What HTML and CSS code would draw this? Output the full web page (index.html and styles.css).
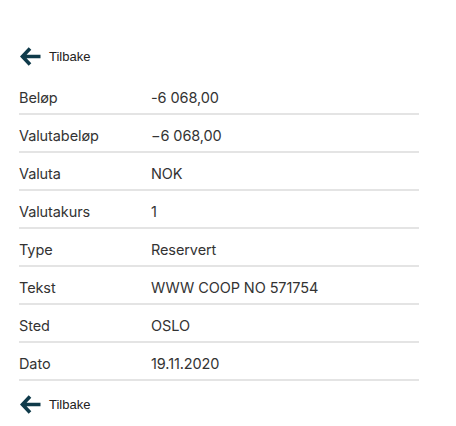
FILE: index.html
```html
<!DOCTYPE html>
<html lang="no">
<head>
  <meta charset="UTF-8" />
  <title>Transaksjon</title>
  <link rel="stylesheet" href="styles.css">
</head>
<body>
  <div class="details">
    <a class="back" href="#">
      <svg width="21" height="19" viewBox="0 0 21 19"><path d="M10 1.5 L2.4 9.5 L10 17.5 M2.8 9.5 H20.5" fill="none" stroke="#0f3a4a" stroke-width="3.6"/></svg>
      <span>Tilbake</span>
    </a>

    <ul class="rows">
      <li><span class="label">Beløp</span><span class="value">-6 068,00</span></li>
      <li><span class="label">Valutabeløp</span><span class="value">−6 068,00</span></li>
      <li><span class="label">Valuta</span><span class="value">NOK</span></li>
      <li><span class="label">Valutakurs</span><span class="value">1</span></li>
      <li><span class="label">Type</span><span class="value">Reservert</span></li>
      <li><span class="label">Tekst</span><span class="value">WWW COOP NO 571754</span></li>
      <li><span class="label">Sted</span><span class="value">OSLO</span></li>
      <li><span class="label">Dato</span><span class="value">19.11.2020</span></li>
    </ul>

    <a class="back bottom" href="#">
      <svg width="21" height="19" viewBox="0 0 21 19"><path d="M10 1.5 L2.4 9.5 L10 17.5 M2.8 9.5 H20.5" fill="none" stroke="#0f3a4a" stroke-width="3.6"/></svg>
      <span>Tilbake</span>
    </a>
  </div>
</body>
</html>
```

FILE: styles.css
```css
* {
  box-sizing: border-box;
}

body {
  margin: 0;
  background: #fff;
  color: #333;
  font-family: "Inter", sans-serif;
}

.details {
  width: 400px;
  margin-left: 19px;
  padding-top: 46px;
}

.back {
  display: flex;
  align-items: center;
  gap: 8px;
  padding-left: 1px;
  height: 20px;
  color: #222;
  text-decoration: none;
  font-family: "Liberation Sans", Arial, sans-serif;
  font-size: 13px;
}

.rows {
  list-style: none;
  margin: 11px 0 0;
  padding: 0;
}

.rows li {
  display: flex;
  align-items: center;
  height: 38px;
  padding-top: 4px;
  border-bottom: 2px solid #e4e4e4;
  font-size: 14.5px;
  letter-spacing: -0.1px;
}

.label {
  width: 132px;
}

.bottom {
  margin-top: 13px;
}
```
